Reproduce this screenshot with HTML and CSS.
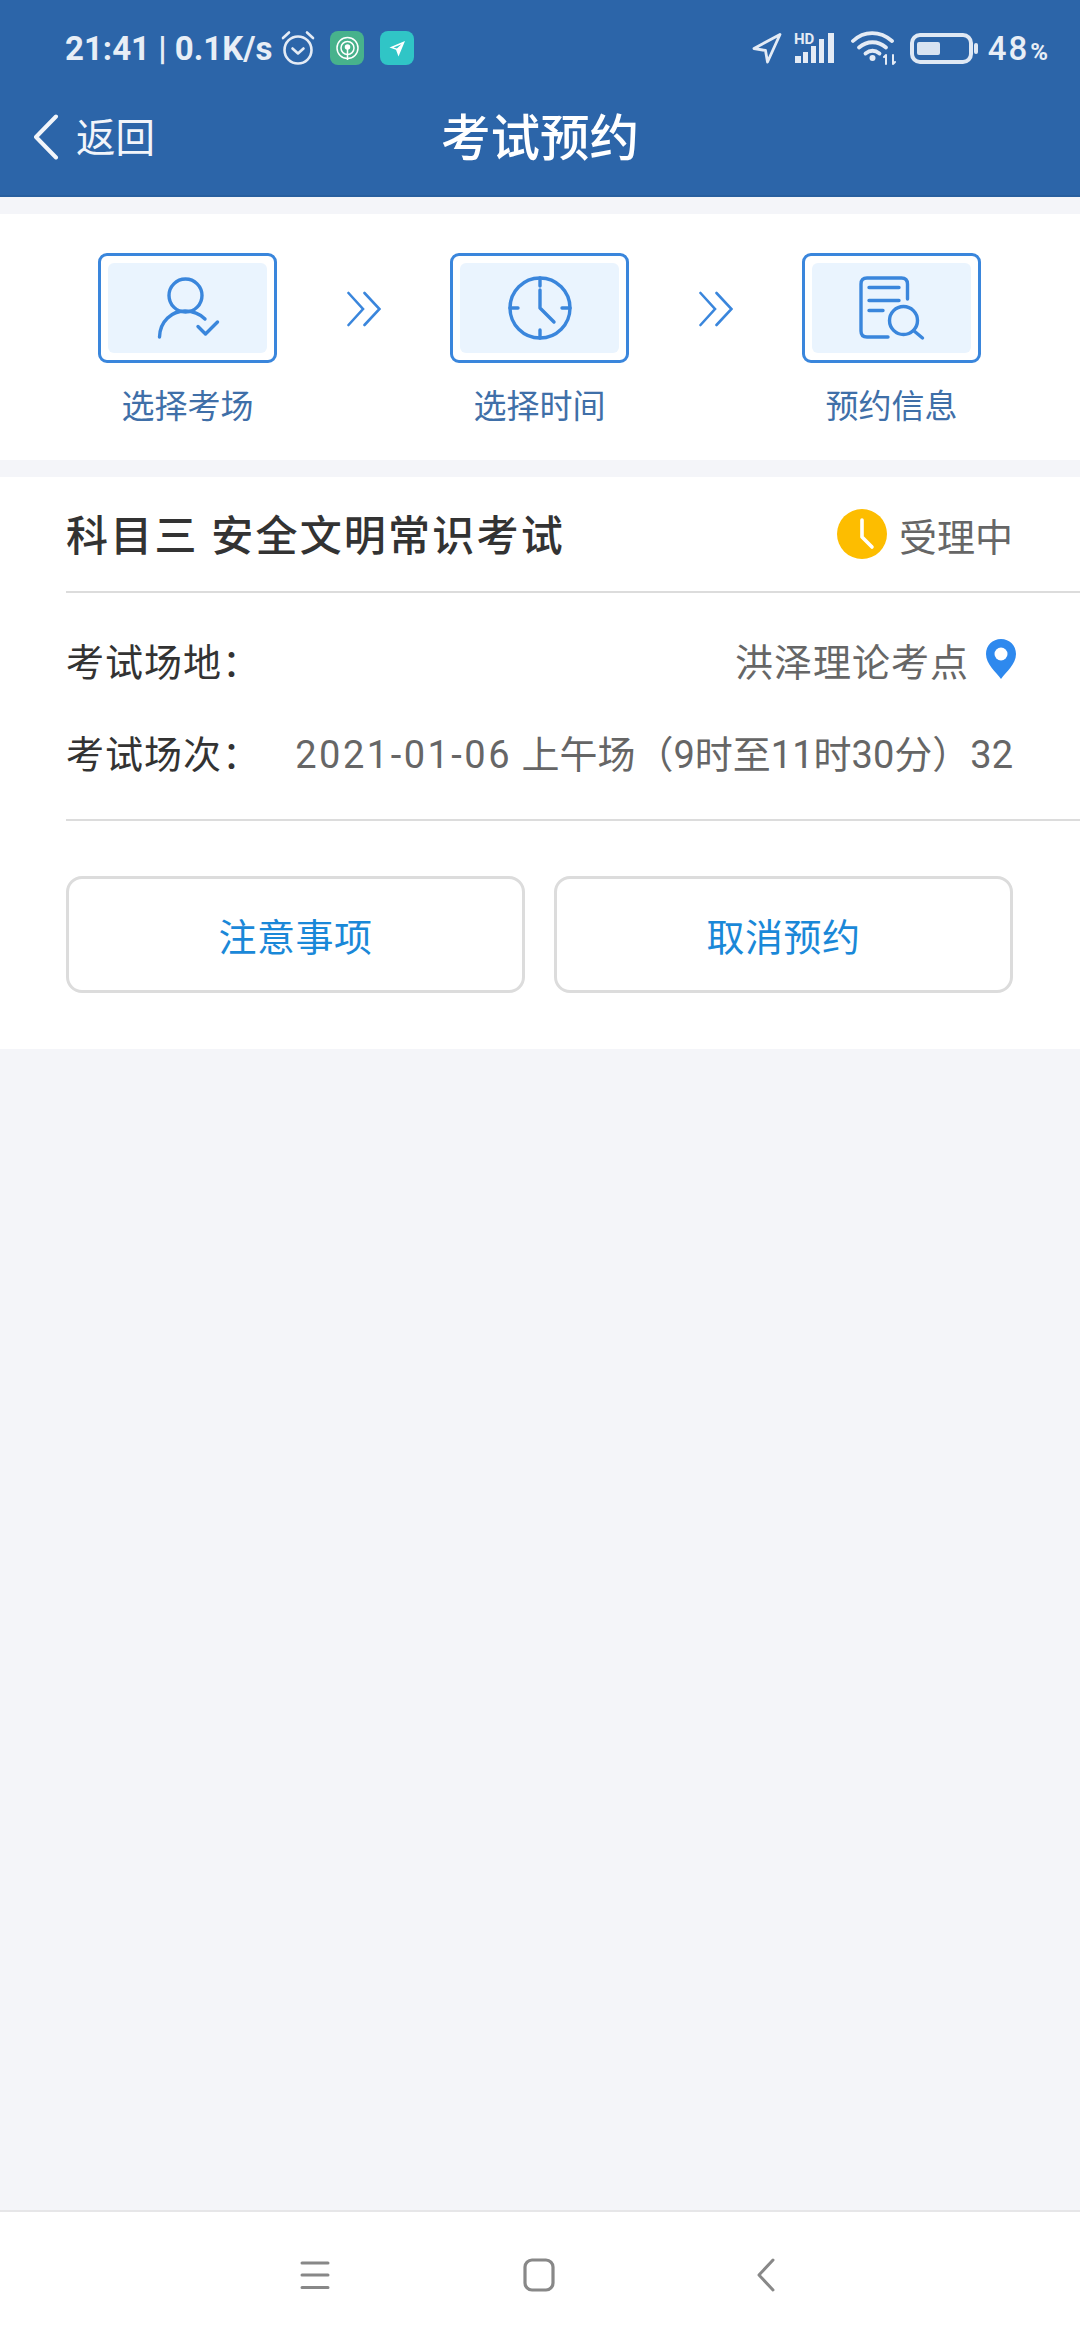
FILE: index.html
```html
<!DOCTYPE html>
<html lang="zh-CN">
<head>
  <meta charset="UTF-8" />
  <title>考试预约</title>
  <link rel="stylesheet" href="styles.css">
</head>
<body>
  <header class="app-header">
    <div class="status-bar">
      <div class="status-left">
        <span class="status-time">21:41 | 0.1K/s</span>
        <svg class="icon-alarm" width="38" height="38" viewBox="0 0 38 38" fill="none" stroke="#e4ebf5" stroke-width="2.6" stroke-linecap="round" stroke-linejoin="round">
          <circle cx="19" cy="21" r="13.5"/>
          <path d="M4 9 L10 3.5 M34 9 L28 3.5"/>
          <path d="M13.5 19.5 L19 24.5 L24.5 19.5"/>
        </svg>
        <span class="app-badge badge-green">
          <svg width="25" height="25" viewBox="0 0 25 25" fill="none" stroke="#fff" stroke-width="1.5">
            <circle cx="12.5" cy="12" r="10.5"/>
            <circle cx="12.5" cy="12" r="6.5"/>
            <circle cx="12.5" cy="11" r="2" fill="#fff"/>
            <path d="M12.5 12 V24"/>
          </svg>
        </span>
        <span class="app-badge badge-teal">
          <svg width="19" height="19" viewBox="0 0 19 19" fill="#fff">
            <path d="M17 2 L1.5 8.5 L8 10.8 L10.5 17.5 Z M13.5 5.2 L8.9 9.6 L5.5 8.4 Z"/>
          </svg>
        </span>
      </div>
      <div class="status-right">
        <svg width="30" height="32" viewBox="0 0 30 32" fill="none" stroke="#e4ebf5" stroke-width="2.8" stroke-linejoin="round">
          <path d="M28 2.5 L2 16.5 L13.5 18.5 L15.5 30 Z"/>
        </svg>
        <svg class="icon-signal" width="42" height="40" viewBox="0 -8 42 40" fill="#e4ebf5">
          <text x="0" y="11.5" class="hd-text">HD</text>
          <rect x="1" y="24" width="6" height="7"/>
          <rect x="9" y="20" width="5" height="11"/>
          <rect x="17" y="14" width="5" height="17"/>
          <rect x="25" y="7" width="5" height="24"/>
          <rect x="34" y="1" width="6" height="30"/>
        </svg>
        <svg class="icon-wifi" width="46" height="34" viewBox="0 0 46 34" fill="none" stroke="#e4ebf5" stroke-width="3.8" stroke-linecap="round">
          <path d="M2 10 C13 -0.5 29 -0.5 41 10"/>
          <path d="M8 16.5 C16 9.5 27 9.5 35 16.5"/>
          <path d="M14.5 22.5 C19 19 24 19 28.5 22.5"/>
          <circle cx="21.5" cy="27" r="3" fill="#e4ebf5" stroke="none"/>
          <path d="M35 24 V33 M33 26 L35 24 M42 24 V33 M44 31 L42 33" stroke-width="2"/>
        </svg>
        <div class="battery">
          <div class="battery-body"><div class="battery-level" style="width: 48%"></div></div>
          <div class="battery-nub"></div>
        </div>
        <span class="battery-text">48<small>%</small></span>
      </div>
    </div>
    <div class="nav-bar">
      <div class="nav-back">
        <svg width="26" height="46" viewBox="0 0 26 46" fill="none" stroke="#f2f5fa" stroke-width="4" stroke-linecap="round" stroke-linejoin="round">
          <path d="M23 2.5 L3 23 L23 43.5"/>
        </svg>
        <span class="nav-back-text">返回</span>
      </div>
      <h1 class="nav-title">考试预约</h1>
    </div>
  </header>

  <section class="steps">
    <div class="step">
      <div class="step-box">
        <div class="step-inner">
          <svg width="64" height="64" viewBox="0 0 64 64" fill="none" stroke="#3a86dc" stroke-width="3.4" stroke-linecap="round" stroke-linejoin="round">
            <circle cx="29.5" cy="19.5" r="16.5"/>
            <path d="M3.5 61 C4 45 16 35 29 35 C37 35 44 38 49 43"/>
            <path d="M42 50.5 L49.5 58 L61.5 46"/>
          </svg>
        </div>
      </div>
      <span class="step-label">选择考场</span>
    </div>
    <svg class="step-arrow" width="34" height="36" viewBox="0 0 34 36" fill="none" stroke="#3a86dc" stroke-width="2.6" stroke-linecap="round">
      <path d="M1.5 2 L16 18 L1.5 34 M17.5 2 L32.5 18 L17.5 34"/>
    </svg>
    <div class="step">
      <div class="step-box">
        <div class="step-inner">
          <svg width="64" height="64" viewBox="0 0 64 64" fill="none" stroke="#3a86dc" stroke-width="3.4" stroke-linecap="round" stroke-linejoin="round">
            <circle cx="32" cy="32" r="30"/>
            <path d="M32 2 V10 M32 54 V62 M2 32 H10 M54 32 H62"/>
            <path d="M32 14 V32 L46 46"/>
          </svg>
        </div>
      </div>
      <span class="step-label">选择时间</span>
    </div>
    <svg class="step-arrow" width="34" height="36" viewBox="0 0 34 36" fill="none" stroke="#3a86dc" stroke-width="2.6" stroke-linecap="round">
      <path d="M1.5 2 L16 18 L1.5 34 M17.5 2 L32.5 18 L17.5 34"/>
    </svg>
    <div class="step">
      <div class="step-box">
        <div class="step-inner">
          <svg width="66" height="66" viewBox="0 0 66 66" fill="none" stroke="#3a86dc" stroke-width="3.4" stroke-linecap="round" stroke-linejoin="round">
            <path d="M48.5 24 V9 C48.5 5 46.5 3 42.5 3 H8 C4 3 2 5 2 9 V56 C2 60 4 62 8 62 H29"/>
            <path d="M10 12.5 H40 M10 25.5 H40 M10 35.5 H24"/>
            <circle cx="44.5" cy="45.5" r="14"/>
            <path d="M54.5 55.5 L63.5 63"/>
          </svg>
        </div>
      </div>
      <span class="step-label">预约信息</span>
    </div>
  </section>

  <section class="card">
    <div class="card-head">
      <h2 class="card-title">科目三 安全文明常识考试</h2>
      <div class="card-status">
        <svg width="50" height="50" viewBox="0 0 50 50">
          <circle cx="25" cy="25" r="25" fill="#fdbd00"/>
          <path d="M25 11 V28 L35 38" fill="none" stroke="#fff" stroke-width="3.6" stroke-linecap="round" stroke-linejoin="round"/>
        </svg>
        <span>受理中</span>
      </div>
    </div>
    <div class="card-info">
      <div class="info-row">
        <span class="info-label">考试场地：</span>
        <span class="info-value">
          <span class="place-name">洪泽理论考点</span>
          <svg width="30" height="40" viewBox="0 0 30 40">
            <path d="M15 0 C6.5 0 0 6.5 0 15 C0 25 10 33 15 40 C20 33 30 25 30 15 C30 6.5 23.5 0 15 0 Z" fill="#2e89ee"/>
            <circle cx="15" cy="15" r="6.5" fill="#fff"/>
          </svg>
        </span>
      </div>
      <div class="info-row">
        <span class="info-label">考试场次：</span>
        <span class="info-session"><span class="session-date">2021-01-06</span> 上午场（9时至11时30分）32</span>
      </div>
    </div>
    <div class="card-actions">
      <button class="action-btn">注意事项</button>
      <button class="action-btn">取消预约</button>
    </div>
  </section>

  <div class="filler"></div>

  <footer class="system-nav">
    <svg width="30" height="30" viewBox="0 0 30 30" fill="none" stroke="#888" stroke-width="3" stroke-linecap="round">
      <path d="M2 3 H28 M2 15 H28 M2 27.5 H28"/>
    </svg>
    <svg class="nav-home" width="32" height="34" viewBox="0 0 32 34" fill="none" stroke="#888" stroke-width="3.2">
      <rect x="2" y="2" width="28" height="30" rx="7"/>
    </svg>
    <svg width="18" height="34" viewBox="0 0 18 34" fill="none" stroke="#888" stroke-width="3" stroke-linecap="round" stroke-linejoin="round">
      <path d="M16 2 L2 17 L16 32"/>
    </svg>
  </footer>
</body>
</html>
```

FILE: styles.css
```css
:root {
  --blue-header: #2c65a9;
  --page-bg: #f4f5f9;
  --line: #dcdcdc;
  --step-blue: #3a86dc;
  --step-text: #3f6fa8;
  --text-dark: #333333;
  --text-gray: #666666;
}

* {
  box-sizing: border-box;
}

body {
  margin: 0;
  height: 2340px;
  overflow: hidden;
  display: flex;
  flex-direction: column;
  background-color: var(--page-bg);
  font-family: Roboto, "Noto Sans CJK SC", sans-serif;
  color: var(--text-dark);
}

/* header */
.app-header {
  height: 197px;
  background-color: var(--blue-header);
  border-bottom: 2px solid #285f9f;
  color: #f2f5fa;
}

.status-bar {
  height: 96px;
  padding: 0 30px 0 65px;
  display: flex;
  justify-content: space-between;
  align-items: center;
}

.status-left,
.status-right {
  display: flex;
  align-items: center;
}

.status-time {
  font-size: 33px;
  font-weight: 700;
  color: #e8eef6;
  white-space: nowrap;
}

.icon-alarm {
  margin-left: 7px;
}

.app-badge {
  width: 34px;
  height: 34px;
  border-radius: 8px;
  display: flex;
  align-items: center;
  justify-content: center;
}

.badge-green {
  margin-left: 13px;
  background-color: #47b28c;
}

.badge-teal {
  margin-left: 16px;
  background-color: #30c5c6;
}

.status-right svg {
  display: block;
}

.icon-signal {
  margin: -8px 0 0 12px;
}

.hd-text {
  font-family: Roboto, sans-serif;
  font-size: 15px;
  font-weight: 700;
}

.icon-wifi {
  margin-left: 15px;
}

.battery {
  margin-left: 13px;
  display: flex;
  align-items: center;
}

.battery-body {
  width: 63px;
  height: 31px;
  padding: 5px 3px;
  border: 4px solid #dfe8f4;
  border-radius: 10px;
}

.battery-level {
  height: 100%;
  background-color: #d8e3f1;
  border-radius: 2px;
}

.battery-nub {
  width: 4px;
  height: 11px;
  margin-left: 1px;
  background-color: #dfe8f4;
  border-radius: 2px;
}

.battery-text {
  margin-left: 10px;
  font-size: 33px;
  font-weight: 500;
  letter-spacing: 2px;
  color: #e8eef6;
  white-space: nowrap;
}

.battery-text small {
  margin-left: 1px;
  font-size: 24px;
  font-weight: 700;
}

.nav-bar {
  position: relative;
  height: 99px;
  padding: 0 0 17px 33px;
  display: flex;
  align-items: center;
}

.nav-back {
  display: flex;
  align-items: center;
  gap: 17px;
  font-size: 39.5px;
}

.nav-back-text {
  margin-bottom: 5px;
}

.nav-title {
  position: absolute;
  left: 0;
  right: 0;
  margin: 0 0 5px;
  text-align: center;
  font-size: 49.5px;
  font-weight: 500;
  color: #fff;
}

/* steps */
.steps {
  height: 246px;
  margin-top: 17px;
  padding: 39px 99px 0 98px;
  background-color: #fff;
  display: flex;
  justify-content: space-between;
  align-items: flex-start;
}

.step {
  width: 179px;
  display: flex;
  flex-direction: column;
  align-items: center;
}

.step-box {
  width: 179px;
  height: 110px;
  padding: 7px;
  border: 3px solid var(--step-blue);
  border-radius: 9px;
}

.step-inner {
  height: 100%;
  background-color: #eaf4fe;
  border-radius: 6px;
  display: flex;
  align-items: center;
  justify-content: center;
}

.step-label {
  margin-top: 17px;
  font-size: 33px;
  color: var(--step-text);
  white-space: nowrap;
}

.step-arrow {
  margin-top: 38px;
}

/* card */
.card {
  margin-top: 17px;
  height: 572px;
  background-color: #fff;
}

.card-head {
  height: 116px;
  margin-left: 66px;
  padding-right: 67px;
  border-bottom: 2px solid var(--line);
  display: flex;
  justify-content: space-between;
  align-items: center;
}

.card-title {
  margin: 0 0 3px;
  font-size: 42px;
  font-weight: 500;
  letter-spacing: 2.2px;
  color: var(--text-dark);
}

.card-status {
  display: flex;
  align-items: center;
  gap: 12px;
  font-size: 38px;
  color: var(--text-gray);
}

.card-info {
  margin-left: 66px;
  padding: 20px 67px 22px 0;
  border-bottom: 2px solid var(--line);
}

.info-row {
  height: 92px;
  display: flex;
  justify-content: space-between;
  align-items: center;
}

.info-label {
  font-size: 38px;
  letter-spacing: 1px;
  color: var(--text-dark);
}

.info-value {
  display: flex;
  align-items: center;
  font-size: 38px;
  letter-spacing: 1px;
  color: var(--text-gray);
  white-space: nowrap;
}

.info-session {
  font-size: 38px;
  color: var(--text-gray);
  white-space: nowrap;
}

.session-date {
  letter-spacing: 2.5px;
}

.place-name {
  margin-right: 17px;
}

.info-value svg {
  margin-right: -3px;
}

.card-actions {
  padding: 55px 67px 0 66px;
  display: flex;
  gap: 29px;
}

.action-btn {
  flex: 1;
  height: 117px;
  background-color: #fff;
  border: 3px solid var(--line);
  border-radius: 16px;
  font-family: inherit;
  font-size: 38px;
  letter-spacing: 0.5px;
  color: #1a88d8;
}

.filler {
  flex: 1;
}

/* android nav */
.system-nav {
  height: 130px;
  padding: 0 0 2px 300px;
  background-color: #fff;
  border-top: 2px solid #e6e6e8;
  display: flex;
  align-items: center;
}

.nav-home {
  margin: 0 202px 0 193px;
}
```
